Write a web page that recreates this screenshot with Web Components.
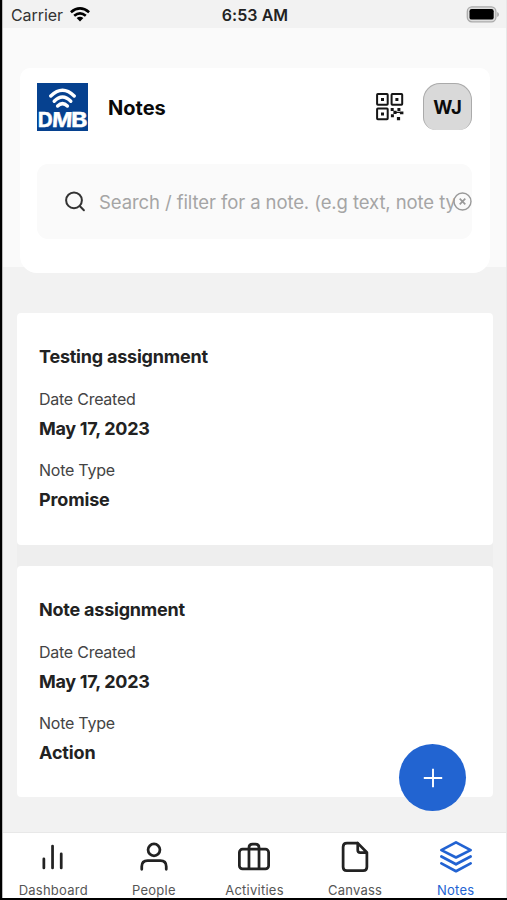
<!DOCTYPE html>
<html lang="en"><head><meta charset="utf-8"><title>Notes</title>
<style>html,body{margin:0;height:900px;overflow:hidden;background:#000}body{font-family:Inter,"Liberation Sans",sans-serif;color:#222}</style></head>
<body><notes-app></notes-app>
<script>
const define=(name,html)=>customElements.define(name,class extends HTMLElement{
  constructor(){super();this.attachShadow({mode:'open'}).innerHTML=html;}
});

define('status-bar',`<style>
:host{display:grid;grid-template-columns:1fr auto 1fr;align-items:center;height:28px;padding:1px 7px 0 8px;box-sizing:border-box;background:#f2f2f2;font-size:16px;line-height:28px}
.l{display:flex;align-items:center;gap:7px;color:#333;letter-spacing:-.07px}
.l svg{margin-top:-2px}
.t{font-weight:600;color:#222;letter-spacing:.05px}
.r{justify-self:end;display:block;margin-top:-2px}
</style>
<div class="l"><span>Carrier</span><svg width="20" height="15" viewBox="0 0 20 15"><g fill="none" stroke="#000" stroke-width="2.7"><path d="M.9 5.2Q10-2.4 19.1 5.2"/><path d="M4.2 8.7Q10 4 15.8 8.7"/></g><path d="M6.6 11.1Q10 8.4 13.4 11.1L10 14.6z"/></svg></div>
<span class="t">6:53 AM</span>
<svg class="r" width="33" height="17" viewBox="0 0 33 17"><rect x="1.3" y=".8" width="28.6" height="15" rx="4.6" fill="#ddd" stroke="#aaa" stroke-width="1.3"/><rect x="3.5" y="3" width="24.2" height="10.6" rx="2.2"/><path d="M31.2 6v5q1.8-.8 1.8-2.5T31.2 6" fill="#aaa"/></svg>`);

define('brand-logo',`<style>:host,svg{display:block}</style>
<svg width="51" height="48" viewBox="0 0 51 48"><path fill="#06418f" d="M0 0h51v48H0z"/><g fill="none" stroke="#fff" stroke-width="3.4" stroke-linecap="round"><path d="M13.800 13Q25.500 1.400 37.200 13"/><path d="M17.200 18.200Q25.500 9.800 33.800 18.200"/><path d="M20.600 23Q25.500 18.200 30.400 23"/></g>
<g font-family="Inter,sans-serif" font-size="20.500" font-weight="700" fill="#fff" stroke="#fff" stroke-width=".4"><text x=".8" y="44.300" textLength="15" lengthAdjust="spacingAndGlyphs">D</text><text transform="translate(14.800 44.300) skewX(-4)" textLength="20" lengthAdjust="spacingAndGlyphs">M</text><text x="34" y="44.300" textLength="16.500" lengthAdjust="spacingAndGlyphs">B</text></g></svg>`);

define('qr-icon',`<style>:host,svg{display:block}</style>
<svg width="28" height="28" viewBox="0 0 28 28"><g fill="none" stroke="#161616" stroke-width="2"><rect x="1.1" y="1.1" width="10.6" height="10.6" rx=".7"/><rect x="15.6" y="1.1" width="10.6" height="10.6" rx=".7"/><rect x="1.1" y="15.6" width="10.6" height="10.6" rx=".7"/></g><path fill="#161616" d="M5 5h3v3H5zM19.4 5h3v3h-3zM5 19.4h3v3H5zM14.7 15h3v3h-3zM17.4 17.7h3.2v3.2h-3.2zM14.9 21.3h3v3h-3zM21.4 15h3v3h-3zM23.9 18.4h3.5v2.8h-3.5zM20.9 24h3.2v3.2h-3.2zM20 18.7h4v1.4h-4z"/></svg>`);

define('user-badge',`<style>:host{display:flex;align-items:center;justify-content:center;box-sizing:border-box;width:49px;height:47px;border:1.5px solid #aaa;border-bottom:0;border-radius:17px 17px 13px 13px;background:#d9d9d9;color:#0b0b0b;font-size:18.5px;font-weight:700;letter-spacing:-.2px}</style><slot></slot>`);

define('search-field',`<style>
:host{display:grid;grid-template-columns:20px 1fr;gap:14px;align-items:center;box-sizing:border-box;height:75px;padding-left:28px;border-radius:11px;background:#fafafa;position:relative}
svg{display:block}.p{font-size:18.5px;color:#a5a5a5;white-space:nowrap;overflow:hidden;width:356px;letter-spacing:-.09px;padding-top:1px}
.x{position:absolute;right:0;top:28px}
</style><svg width="21" height="21" viewBox="0 0 21 21" fill="none" stroke="#333" stroke-width="2"><circle cx="9" cy="9.300" r="7.900"/><path d="m14.700 15 4.200 4.200" stroke-linecap="round"/></svg>
<div class="p"><slot></slot></div>
<svg class="x" width="19" height="19" viewBox="0 0 19 19" fill="none" stroke="#999" stroke-width="1.4"><circle cx="9.500" cy="9.500" r="8.500"/><path stroke-width="1.7" d="m6.700 6.700 5.600 5.600m0-5.600-5.600 5.600"/></svg>`);

define('page-header',`<style>
:host{display:block;background:#fafafa;height:239px;padding:40px 16px 0 17px;box-sizing:border-box}
.c{background:#fff;height:205px;border-radius:10px 10px 17px 17px;box-sizing:border-box;padding:15px 18px 0 17px}
.row{display:flex;align-items:center;height:48px;margin-bottom:33px}
h1{margin:0 auto 0 20px;font-size:20px;font-weight:700;line-height:28px;color:#090909;padding-top:2px}
qr-icon{margin-right:19px}
user-badge{margin-top:-1px}
</style><div class="c"><div class="row"><brand-logo></brand-logo><h1>Notes</h1><qr-icon></qr-icon><user-badge>WJ</user-badge></div>
<search-field>Search / filter for a note. (e.g text, note type)</search-field></div>`);

define('note-card',`<style>
:host{display:block;box-sizing:border-box;background:#fff;border-radius:4px;padding:32px 22px 0;height:232px}
h2,dl,dd{margin:0}
h2,dd{font-size:18px;line-height:24px;font-weight:650;color:#222;letter-spacing:-.3px}
h2{margin-bottom:20px;letter-spacing:-.22px}
dt{font-size:16px;line-height:20px;color:#444;letter-spacing:-.25px;margin-bottom:8px}
dd{margin-bottom:19px}
.k{letter-spacing:-.15px}
</style><h2><slot name="title"></slot></h2><dl><dt>Date Created</dt><dd><slot name="date"></slot></dd><dt>Note Type</dt><dd class="k"><slot name="type"></slot></dd></dl>`);

const icons={
bars:'<path d="M6 18v10M15.500 4v24M25 12.500V28" stroke-width="3"/>',
person:'<circle cx="16" cy="8.200" r="6.500"/><path d="M2.600 29.500v-3q0-6.500 6.500-6.500h13.800q6.500 0 6.500 6.500v3"/>',
bag:'<rect x="0" y="7.500" width="32" height="21.500" rx="3.500"/><path d="M10.500 28.500V6q0-4 4-4h3q4 0 4 4v22.500"/>',
file:'<path d="M19 .8H7.200Q3 .8 3 5v22q0 4 4 4h18q4 0 4-4V11L19 .8v7.500q0 2.800 2.800 2.800h7"/>',
layers:'<path d="M16 0 32 8.500 16 16.500 0 8.500zM0 15.500l16 8.500 16-8.500M0 23l16 8.500 16-8.500"/>'};
customElements.define('nav-item',class extends HTMLElement{
  constructor(){super();this.attachShadow({mode:'open'});}
  connectedCallback(){this.shadowRoot.innerHTML=`<style>
:host{flex:1;display:flex;flex-direction:column;align-items:center;color:#222;padding-top:8px}
:host([active]){color:#2263d2}
svg{display:block;overflow:visible}
span{font-size:13px;line-height:16px;margin-top:9px;color:#555;letter-spacing:.25px}
:host([active]) span{color:inherit}
</style><svg width="32" height="32" viewBox="-1.500 -1.500 35 35" fill="none" stroke="currentColor" stroke-width="3" stroke-linecap="round" stroke-linejoin="round">${icons[this.getAttribute('icon')]}</svg><span><slot></slot></span>`;}
});

define('tab-bar',`<style>:host{display:flex;height:66px;box-sizing:border-box;background:#fff;border-top:1px solid #e8e8e8}</style><slot></slot>`);

define('add-button',`<style>:host{display:flex;align-items:center;justify-content:center;width:67px;height:67px;border-radius:50%;background:#2264d1}</style>
<svg width="20" height="20" viewBox="0 0 20 20" stroke="#fff" stroke-width="1.9"><path d="M10 .8v18.400M.8 10h18.400"/></svg>`);

define('notes-app',`<style>
:host{display:flex;flex-direction:column;position:relative;box-sizing:border-box;width:507px;height:900px;border-left:2px solid #000;border-bottom:2px solid #000;background:#f2f2f2;padding-left:1px;box-shadow:inset 1px 0 #bbb,inset -1px 0 #e8e8e8}
status-bar,page-header,tab-bar{margin-right:1px}
page-header{flex:none}
main{flex:1;padding:46px 14px 0;min-height:0;box-sizing:border-box}
.list{display:flex;flex-direction:column;gap:21px;background:#eee;border-radius:4px}
note-card:last-child{height:231px}
add-button{position:absolute;left:397.300px;top:744.400px}
</style><status-bar></status-bar><page-header></page-header>
<main><div class="list">
<note-card><span slot="title">Testing assignment</span><span slot="date">May 17, 2023</span><span slot="type">Promise</span></note-card>
<note-card><span slot="title">Note assignment</span><span slot="date">May 17, 2023</span><span slot="type">Action</span></note-card>
</div></main>
<tab-bar><nav-item icon="bars">Dashboard</nav-item><nav-item icon="person">People</nav-item><nav-item icon="bag">Activities</nav-item><nav-item icon="file">Canvass</nav-item><nav-item icon="layers" active>Notes</nav-item></tab-bar>
<add-button></add-button>`);
</script></body></html>
